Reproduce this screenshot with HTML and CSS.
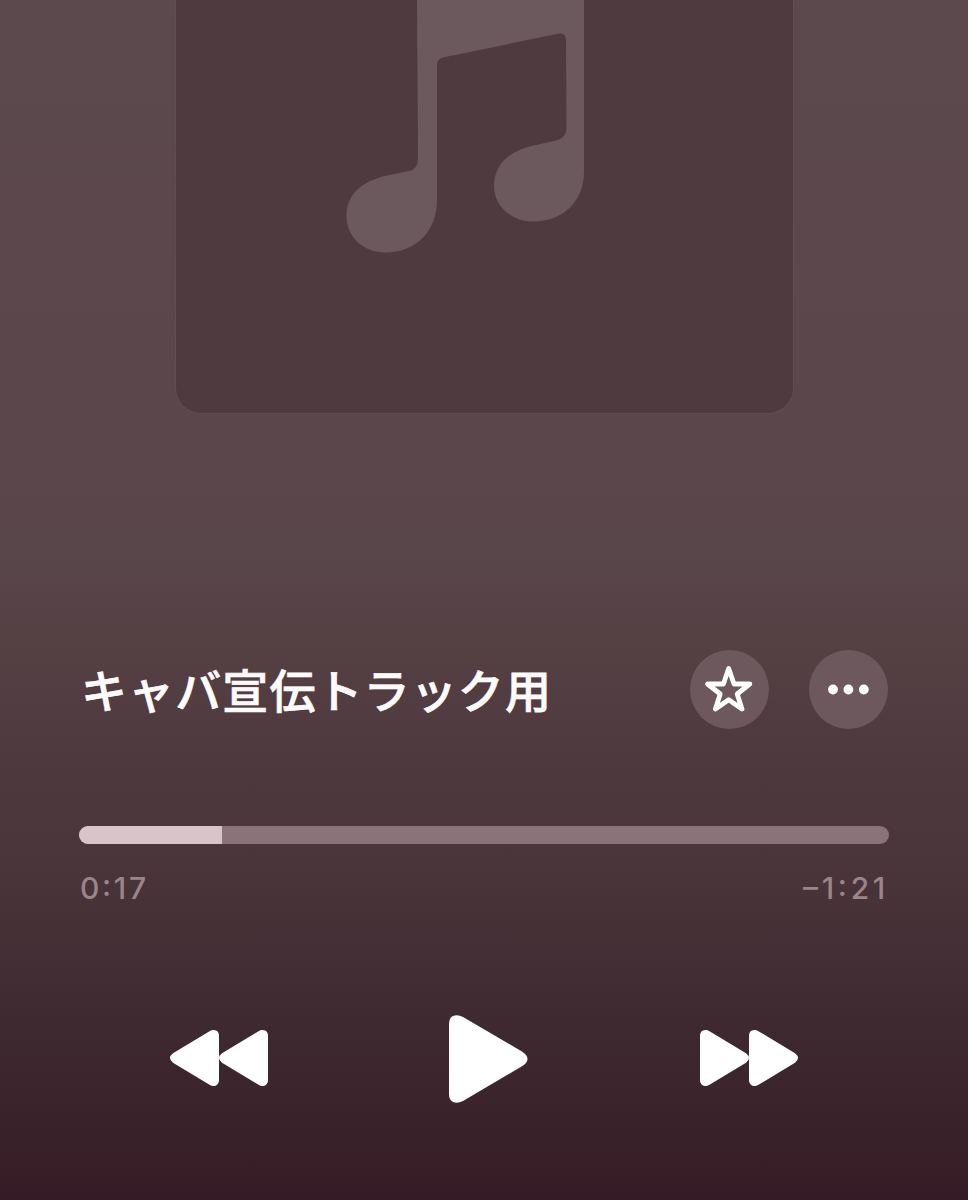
FILE: index.html
```
<!DOCTYPE html>
<html lang="ja">
<head>
<meta charset="utf-8" />
<title>キャバ宣伝トラック用</title>
<link rel="stylesheet" href="styles.css">
</head>
<body>
  <section class="player">
    <div class="artwork">
      <svg class="note" width="240" height="254" viewBox="346 0 240 254">
        <path d="M417 0 H584 V172 C584 202 562 221.500 534 221.500 C511 221.500 494 206 494 186 C494 163 511 150 536 145 L556 140.500 Q566.500 138 566.500 128 L566 40 Q566 32 558 33.700 L443 57.500 Q437 59 437 65 V200 C437 232 415 252.500 386 252.500 C363 252.500 346.500 237 346.500 216 C346.500 194 362 181 387 175.500 L409 171 Q418 169 418 159 Z"/>
      </svg>
    </div>

    <div class="info">
      <h1 class="title">キャバ宣伝トラック用</h1>
      <div class="actions">
        <button class="round" aria-label="お気に入り">
          <svg width="79" height="79" viewBox="0 0 79 79">
            <path class="star" d="M38.700 18.500 L44 34 L59.800 34 L47.200 44 L52 59 L38.700 49.700 L25.400 59 L30.200 44 L17.600 34 L33.400 34 Z"/>
          </svg>
        </button>
        <button class="round" aria-label="その他">
          <svg width="79" height="79" viewBox="0 0 79 79">
            <circle cx="24" cy="39.500" r="4.900"/>
            <circle cx="39.400" cy="39.500" r="4.900"/>
            <circle cx="54.800" cy="39.500" r="4.900"/>
          </svg>
        </button>
      </div>
    </div>

    <div class="progress">
      <div class="actual_pro" style="width:142.500px"></div>
    </div>
    <div class="times">
      <span>0:17</span>
      <span class="remain">–1:21</span>
    </div>

    <nav class="controls">
      <button aria-label="前へ">
        <svg width="98" height="58" viewBox="0 0 98 58">
          <path id="tri" d="M3 24.300 L39.500 2.200 Q43 0.200 46 1.600 Q49 3 49 7 V51 Q49 55 46 56.400 Q43 57.800 39.500 55.800 L3 33.700 Q-3 29 3 24.300 Z"/>
          <use href="#tri" x="49"/>
        </svg>
      </button>
      <button class="play" aria-label="再生">
        <svg width="80" height="90" viewBox="0 0 80 90">
          <path d="M1 10 Q1 4 5 2 Q9.500 0 15 3 L73.500 37.200 Q79.500 41 79.500 45 Q79.500 49 73.500 52.600 L15 87 Q9.500 90 5 88 Q1 86 1 80 Z"/>
        </svg>
      </button>
      <button aria-label="次へ">
        <svg width="98" height="58" viewBox="0 0 98 58">
          <g transform="translate(98 0) scale(-1 1)">
            <use href="#tri"/>
            <use href="#tri" x="49"/>
          </g>
        </svg>
      </button>
    </nav>
  </section>
</body>
</html>
```

FILE: styles.css
```
*{
  margin:0;
  padding:0;
  box-sizing:border-box;
}
.player{
  width:968px;
  height:1200px;
  padding:0 79px;
  overflow:hidden;
  background:linear-gradient(#5c494d 0, #5b474b 480px, #58454a 560px, #554044 640px, #4e393f 760px, #49343a 880px, #402b32 1000px, #3b242b 1100px, #351b25 1200px);
}
svg{
  display:block;
}
.artwork{
  width:619px;
  height:414px;
  margin-left:96px;
  padding-left:170px;
  background:#4f3a3f;
  border:1px solid #614c51;
  border-top:0;
  border-radius:0 0 26px 26px;
}
.note{
  fill:#6c595d;
}
.info{
  display:flex;
  justify-content:space-between;
  align-items:center;
  height:79px;
  margin-top:236px;
}
.title{
  padding:0 0 3px 2px;
  font-family:"Noto Sans CJK JP", sans-serif;
  font-size:46px;
  font-weight:500;
  line-height:76px;
  letter-spacing:1.100px;
  color:#fffafa;
  -webkit-text-stroke:0.700px #fffafa;
}
.actions{
  display:flex;
  gap:40px;
  padding-right:1px;
}
button{
  border:0;
  background:none;
  fill:white;
}
.round{
  width:79px;
  height:79px;
  border-radius:50%;
  background:#6d585d;
}
.star{
  fill:none;
  stroke:white;
  stroke-width:4.800;
  stroke-linejoin:round;
}
.progress{
  height:18px;
  margin-top:97px;
  border-radius:9px;
  background:#8a7479;
  overflow:hidden;
}
.actual_pro{
  height:18px;
  background:#d7c5c9;
}
.times{
  display:flex;
  justify-content:space-between;
  margin-top:26px;
  padding-left:1px;
  font-family:Inter, sans-serif;
  font-size:30px;
  font-weight:500;
  font-feature-settings:"case";
  line-height:36px;
  letter-spacing:2.700px;
  color:#9a858a;
}
.remain{
  letter-spacing:3.700px;
}
.controls{
  display:flex;
  justify-content:space-between;
  align-items:center;
  height:90px;
  margin-top:107px;
  padding:0 91px;
}
.play{
  padding:1px 0 0 7px;
}
```
